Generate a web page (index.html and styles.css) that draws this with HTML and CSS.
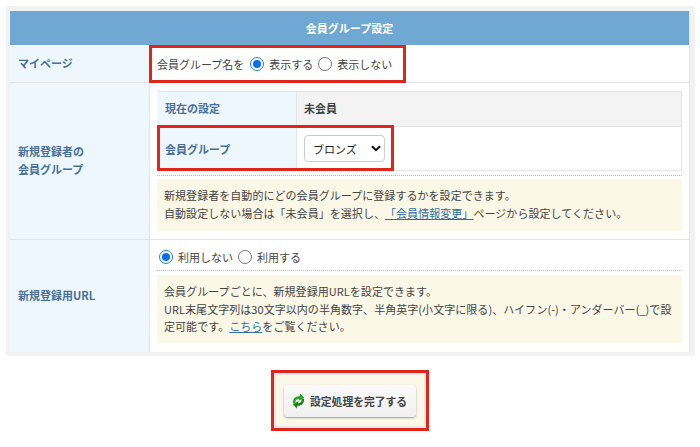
FILE: index.html
```html
<!DOCTYPE html>
<html lang="ja">
<head>
  <meta charset="UTF-8">
  <title>会員グループ設定</title>
  <link rel="stylesheet" href="styles.css">
</head>
<body>
  <div class="panel">
    <div class="table">
      <div class="table-head">会員グループ設定</div>

      <div class="row row-mypage">
        <div class="label">マイページ</div>
        <div class="value value-inline">
          <div class="mark mark-name"></div>
          <span class="caption">会員グループ名を</span>
          <label class="radio"><span class="dot on"></span>表示する</label>
          <label class="radio"><span class="dot"></span>表示しない</label>
        </div>
      </div>

      <div class="row row-group">
        <div class="label">新規登録者の<br>会員グループ</div>
        <div class="value value-group">
          <div class="inner">
            <div class="inner-row inner-top">
              <div class="inner-label">現在の設定</div>
              <div class="inner-value grey">未会員</div>
            </div>
            <div class="inner-row inner-bottom">
              <div class="mark mark-group"></div>
              <div class="inner-label">会員グループ</div>
              <div class="inner-value">
                <div class="select">ブロンズ
                  <svg width="10" height="7" viewBox="0 0 10 7"><path d="M1 1.200 5 5.200 9 1.200" fill="none" stroke="#111" stroke-width="2"/></svg>
                </div>
              </div>
            </div>
          </div>
          <div class="dots"></div>
          <div class="note note-group">
            新規登録者を自動的にどの会員グループに登録するかを設定できます。<br>
            自動設定しない場合は「未会員」を選択し、<a href="#">「会員情報変更」</a>ページから設定してください。
          </div>
        </div>
      </div>

      <div class="row row-url">
        <div class="label">新規登録用URL</div>
        <div class="value value-url">
          <div class="radios">
            <label class="radio"><span class="dot on"></span>利用しない</label>
            <label class="radio"><span class="dot"></span>利用する</label>
          </div>
          <div class="dots"></div>
          <div class="note">
            会員グループごとに、新規登録用URLを設定できます。<br>
            URL末尾文字列は30文字以内の半角数字、半角英字(小文字に限る)、ハイフン(-)・アンダーバー(_)で設<br>
            定可能です。<a href="#">こちら</a>をご覧ください。
          </div>
        </div>
      </div>
    </div>
  </div>

  <div class="submit-wrap">
    <div class="submit-area">
      <button class="submit" type="button">
        <svg class="submit-icon" width="13" height="16" viewBox="0 0 13 16">
          <path d="M1 10.500C.4 6 3.400 2.800 7.500 3.200L8.400 .4 12 4.800 6.600 7.800 7 5.800C4.800 5.600 3 7.200 3.400 10.200Z" fill="#22a51c"/>
          <path d="M12 5.500C12.600 10 9.600 13.200 5.500 12.800L4.600 15.600 1 11.200 6.400 8.200 6 10.200C8.200 10.400 10 8.800 9.600 5.800Z" fill="#0f8a0c"/>
        </svg>
        設定処理を完了する
      </button>
    </div>
  </div>
</body>
</html>
```

FILE: styles.css
```css
body {
  margin: 0;
  font-family: "Noto Sans CJK JP", "Noto Sans", sans-serif;
  font-size: 11px;
  color: #444;
  background: #fff;
  text-spacing-trim: space-all;
}
.panel {
  width: 680px;
  margin: 6px 0 0 6px;
  padding: 5px 5px 4px 4px;
  background: #f2f2f2;
  border-radius: 3px;
}
.table {
  background: #fff;
  border-right: 1px solid #e4e4e4;
}
.table-head {
  height: 34px;
  line-height: 34px;
  text-align: center;
  font-weight: bold;
  color: #fff;
  background: #6fa8d2;
}
.row {
  display: grid;
  grid-template-columns: 140px 1fr;
  border-bottom: 1px solid #e4e4e4;
  box-sizing: border-box;
}
.row-mypage { height: 38px; }
.row-mypage .label { padding-top: 1px; }
.row-group { height: 157px; }
.row-url { height: 112px; border-bottom: 0; }
.label {
  display: flex;
  align-items: center;
  padding-left: 8px;
  line-height: 17.600px;
  font-weight: bold;
  color: #47709a;
  background: #eff7fe;
  border-right: 1px solid #e4e4e4;
}
.value {
  position: relative;
  padding: 0 7px;
}
.value-inline {
  display: flex;
  align-items: center;
}
.caption { margin-right: 6px; }
.radio {
  display: inline-flex;
  align-items: center;
  margin-right: 5px;
}
.dot {
  width: 12px;
  height: 12px;
  margin-right: 5px;
  border: 1px solid #777;
  border-radius: 50%;
  background: #fff;
}
.dot.on {
  width: 8px;
  height: 8px;
  padding: 2px;
  border: 1px solid #1a7ff0;
  background: #0a6fe8;
  background-clip: content-box;
}
.value-group { padding-top: 8px; }
.inner {
  border: 1px solid #e4e4e4;
  border-left: 0;
}
.inner-row {
  position: relative;
  display: grid;
  grid-template-columns: 140px 1fr;
}
.inner-top {
  height: 35px;
  border-bottom: 1px solid #e4e4e4;
  box-sizing: border-box;
}
.inner-top .inner-label,
.inner-top .inner-value { padding-bottom: 2px; }
.inner-bottom { height: 43px; }
.inner-label {
  display: flex;
  align-items: center;
  padding-left: 8px;
  font-weight: bold;
  color: #47709a;
  background: #eff7fe;
  border-right: 1px solid #e4e4e4;
}
.inner-value {
  display: flex;
  align-items: center;
  padding-left: 7px;
  font-weight: bold;
}
.inner-value.grey { background: #f3f3f3; }
.select {
  display: flex;
  align-items: center;
  justify-content: space-between;
  width: 81px;
  height: 27px;
  padding: 0 3px 0 8px;
  box-sizing: border-box;
  font-weight: normal;
  color: #222;
  background: #fff;
  border: 1px solid #ccc;
  border-radius: 4px;
}
.dots {
  margin: 4px 0 3px;
  border-top: 1px dotted #bbb;
}
.note {
  padding: 8px 0 7px 7px;
  line-height: 17.600px;
  letter-spacing: .05px;
  white-space: nowrap;
  background: #fbf8e8;
}
.note-group { padding-bottom: 9px; }
a {
  color: #2f6ea5;
  text-decoration: underline;
}
.radios {
  display: flex;
  align-items: center;
  height: 26px;
  padding: 4px 0 0 2px;
}
.value-url .dots { margin: 0 0 4px; }
.mark {
  position: absolute;
  border: 3px solid #e1251b;
  box-sizing: border-box;
}
.mark-name {
  left: -1px;
  top: 0;
  width: 257px;
  height: 38px;
}
.mark-group {
  left: 0;
  top: -2px;
  width: 237px;
  height: 46px;
}
.submit-wrap {
  display: flex;
  justify-content: center;
  margin-top: 14px;
}
.submit-area {
  display: flex;
  align-items: center;
  justify-content: center;
  width: 158px;
  height: 61px;
  box-sizing: border-box;
  background: #fbf8e8;
  border: 3px solid #e1251b;
  outline: 2px solid #e8e8e8;
  outline-offset: -5px;
}
.submit {
  display: flex;
  align-items: center;
  gap: 5px;
  width: 132px;
  height: 32px;
  padding: 0 0 0 8px;
  font: bold 10.800px "Noto Sans CJK JP", "Noto Sans", sans-serif;
  color: #444;
  background: linear-gradient(#fafafa, #f0f0f0);
  border: 0;
  border-radius: 4px;
  box-shadow: 0 1px 2px #999;
}
.submit-icon { flex: none; }
```
